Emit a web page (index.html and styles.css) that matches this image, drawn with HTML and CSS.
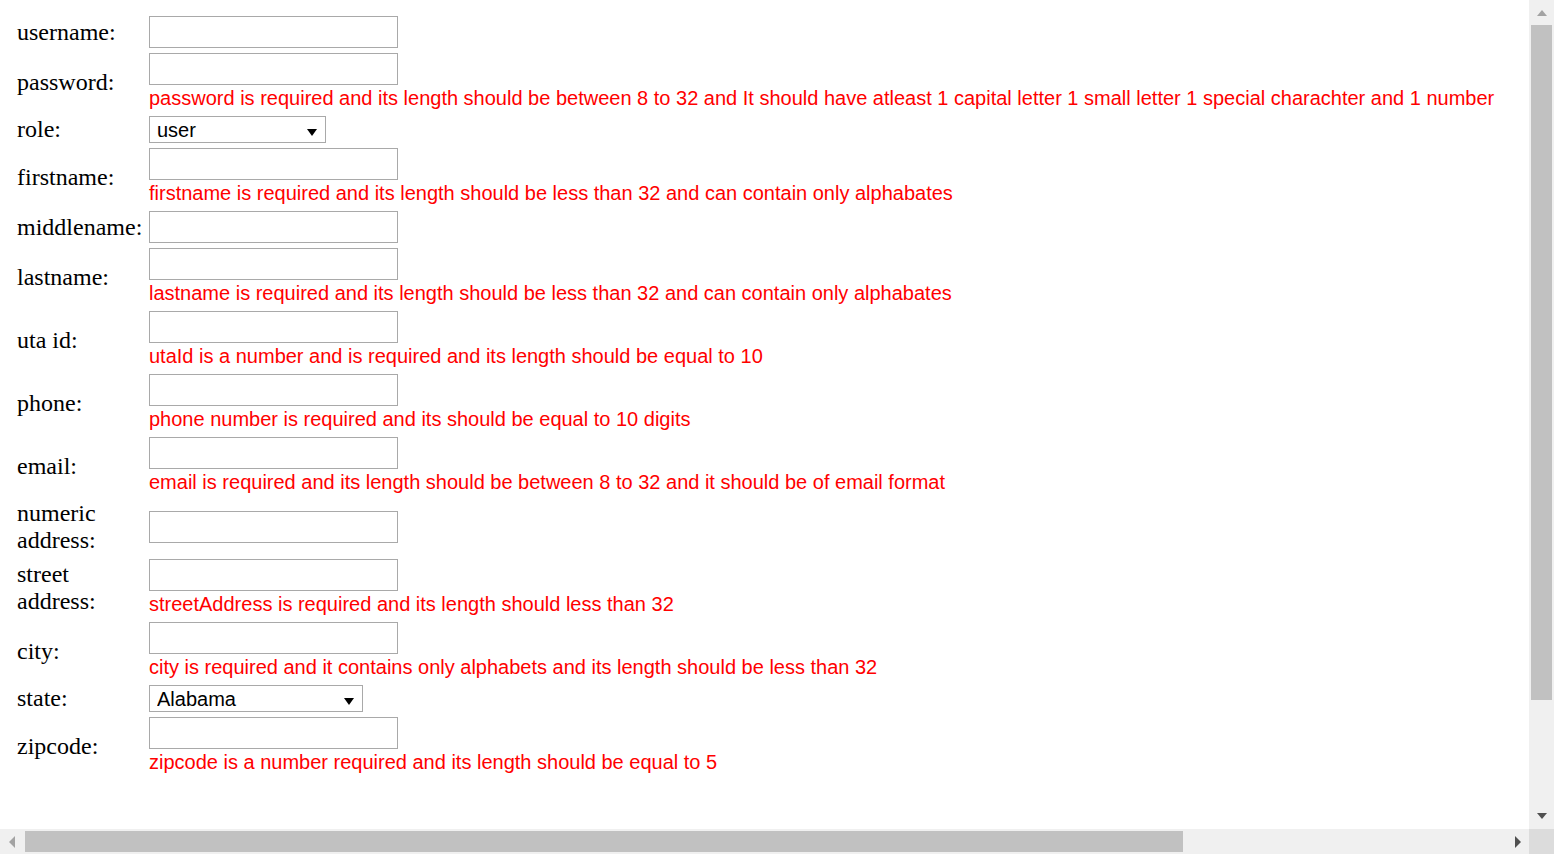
FILE: index.html
```html
<!DOCTYPE html>
<html lang="en">
<head>
<meta charset="utf-8">
<title>Register</title>
<link rel="stylesheet" href="styles.css">
</head>
<body>
<form class="form">
  <label class="label">username:</label>
  <div class="field"><input class="text-input" type="text"></div>

  <label class="label">password:</label>
  <div class="field"><input class="text-input" type="password"><div class="error">password is required and its length should be between 8 to 32 and It should have atleast 1 capital letter 1 small letter 1 special charachter and 1 number</div></div>

  <label class="label">role:</label>
  <div class="field"><span class="select-wrap"><select class="select select-role"><option>user</option><option>admin</option></select></span></div>

  <label class="label">firstname:</label>
  <div class="field"><input class="text-input" type="text"><div class="error">firstname is required and its length should be less than 32 and can contain only alphabates</div></div>

  <label class="label">middlename:</label>
  <div class="field"><input class="text-input" type="text"></div>

  <label class="label">lastname:</label>
  <div class="field"><input class="text-input" type="text"><div class="error">lastname is required and its length should be less than 32 and can contain only alphabates</div></div>

  <label class="label">uta id:</label>
  <div class="field"><input class="text-input" type="text"><div class="error">utaId is a number and is required and its length should be equal to 10</div></div>

  <label class="label">phone:</label>
  <div class="field"><input class="text-input" type="text"><div class="error">phone number is required and its should be equal to 10 digits</div></div>

  <label class="label">email:</label>
  <div class="field"><input class="text-input" type="text"><div class="error">email is required and its length should be between 8 to 32 and it should be of email format</div></div>

  <label class="label">numeric<br>address:</label>
  <div class="field"><input class="text-input" type="text"></div>

  <label class="label">street<br>address:</label>
  <div class="field"><input class="text-input" type="text"><div class="error">streetAddress is required and its length should less than 32</div></div>

  <label class="label">city:</label>
  <div class="field"><input class="text-input" type="text"><div class="error">city is required and it contains only alphabets and its length should be less than 32</div></div>

  <label class="label">state:</label>
  <div class="field"><span class="select-wrap"><select class="select select-state"><option>Alabama</option><option>Alaska</option><option>Arizona</option></select></span></div>

  <label class="label">zipcode:</label>
  <div class="field"><input class="text-input" type="text"><div class="error">zipcode is a number required and its length should be equal to 5</div></div>
</form>

<div class="vscroll" aria-hidden="true">
  <div class="sb-btn"><span class="arrow arrow-up"></span></div>
  <div class="sb-track sb-track-v"><div class="sb-thumb sb-thumb-v"></div></div>
  <div class="sb-btn"><span class="arrow arrow-down"></span></div>
</div>
<div class="hscroll" aria-hidden="true">
  <div class="sb-btn"><span class="arrow arrow-left"></span></div>
  <div class="sb-track sb-track-h"><div class="sb-thumb sb-thumb-h"></div></div>
  <div class="sb-btn"><span class="arrow arrow-right"></span></div>
</div>
<div class="sb-corner" aria-hidden="true"></div>
</body>
</html>
```
FILE: styles.css
```css
html {
  background: #ffffff;
}

body {
  margin: 0;
  font-family: "Liberation Serif", "Times New Roman", serif;
  color: #000000;
}

.form {
  padding: 16px 0 0 17px;
  display: grid;
  grid-template-columns: 127px auto;
  column-gap: 5px;
  row-gap: 5px;
  align-content: start;
  justify-content: start;
}

.label {
  align-self: center;
  font-size: 24px;
  line-height: 27px;
  white-space: nowrap;
}

.field {
  align-self: center;
  display: flex;
  flex-direction: column;
  align-items: flex-start;
}

.text-input {
  box-sizing: border-box;
  width: 249px;
  height: 32px;
  margin: 0;
  padding: 0 3px;
  border: 1px solid #a9a9a9;
  background: #ffffff;
  font-family: "Liberation Sans", Arial, sans-serif;
  font-size: 20px;
  outline: none;
}

.error {
  font-family: "Liberation Sans", Arial, sans-serif;
  font-size: 20px;
  line-height: 26px;
  color: #ff0000;
  white-space: nowrap;
}

.select-wrap {
  position: relative;
  display: block;
}

.select-wrap::after {
  content: "";
  position: absolute;
  right: 9px;
  top: 13px;
  width: 0;
  height: 0;
  border-left: 5px solid transparent;
  border-right: 5px solid transparent;
  border-top: 7px solid #000000;
  pointer-events: none;
}

.select {
  appearance: none;
  -webkit-appearance: none;
  display: block;
  box-sizing: border-box;
  height: 27px;
  margin: 0;
  padding: 0 0 0 7px;
  border: 1px solid #a9a9a9;
  border-radius: 0;
  font-family: "Liberation Sans", Arial, sans-serif;
  font-size: 20px;
  color: #000000;
  background: #ffffff;
}

.select-role {
  width: 177px;
}

.select-state {
  width: 214px;
}

/* browser scrollbars shown in the reference */
.vscroll {
  position: fixed;
  top: 0;
  right: 0;
  bottom: 25px;
  width: 25px;
  display: flex;
  flex-direction: column;
  background: #f0f0f0;
}

.hscroll {
  position: fixed;
  left: 0;
  right: 25px;
  bottom: 0;
  height: 25px;
  display: flex;
  background: #f0f0f0;
}

.sb-corner {
  position: fixed;
  right: 0;
  bottom: 0;
  width: 25px;
  height: 25px;
  background: #dcdcdc;
}

.sb-btn {
  flex: 0 0 25px;
  width: 25px;
  height: 25px;
  display: flex;
  align-items: center;
  justify-content: center;
}

.sb-track {
  flex: 1 1 auto;
  display: flex;
}

.sb-track-v {
  flex-direction: column;
  padding: 0 2px;
}

.sb-track-h {
  padding: 2px 0;
}

.sb-thumb {
  background: #c1c1c1;
}

.sb-thumb-v {
  height: 675px;
}

.sb-thumb-h {
  width: 1158px;
}

.arrow {
  width: 0;
  height: 0;
}

.arrow-up {
  border-left: 5px solid transparent;
  border-right: 5px solid transparent;
  border-bottom: 6px solid #a3a3a3;
  margin-top: 1px;
}

.arrow-down {
  border-left: 5px solid transparent;
  border-right: 5px solid transparent;
  border-top: 6px solid #505050;
  margin-top: -1px;
}

.arrow-left {
  border-top: 6px solid transparent;
  border-bottom: 6px solid transparent;
  border-right: 6px solid #a3a3a3;
  margin-left: -1px;
}

.arrow-right {
  border-top: 6px solid transparent;
  border-bottom: 6px solid transparent;
  border-left: 6px solid #505050;
  margin-left: 2px;
}
```
